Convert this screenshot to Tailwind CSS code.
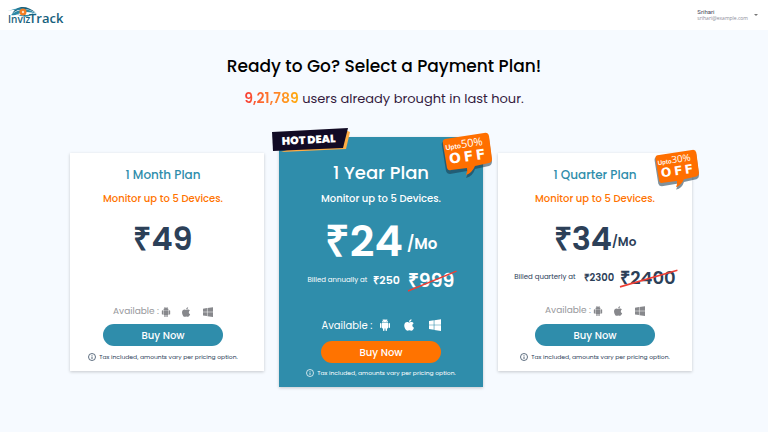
<!DOCTYPE html>
<html lang="en">
<head>
<meta charset="utf-8">
<meta name="viewport" content="width=device-width, initial-scale=1">
<title>InvizTrack – Payment Plans</title>
<script src="https://cdn.jsdelivr.net/npm/@tailwindcss/browser@4"></script>
</head>
<body class="min-h-screen bg-[#f6faff] font-['Poppins','Inter',sans-serif] text-[#2c4058]">

<svg class="hidden" aria-hidden="true">
  <symbol id="android" viewBox="0 0 24 24"><path fill="currentColor" d="M6 18c0 .6.4 1 1 1h1v3.5a1.5 1.5 0 0 0 3 0V19h2v3.500a1.500 1.500 0 0 0 3 0V19h1c.6 0 1-.4 1-1V8H6v10zM3.500 8A1.500 1.500 0 0 0 2 9.500v7a1.500 1.500 0 0 0 3 0v-7A1.500 1.500 0 0 0 3.500 8zm17 0A1.500 1.500 0 0 0 19 9.500v7a1.500 1.500 0 0 0 3 0v-7A1.500 1.500 0 0 0 20.500 8zm-5-5.800l1.300-1.300-.7-.7-1.500 1.500A6 6 0 0 0 12 1c-1 0-1.900.2-2.600.6L7.900.2l-.7.7 1.300 1.300A6 6 0 0 0 6 7h12a6 6 0 0 0-2.500-4.800zM10 5H9V4h1v1zm5 0h-1V4h1v1z"/></symbol>
  <symbol id="apple" viewBox="0 24 376 464"><path fill="currentColor" d="M318.700 268.700c-.2-36.700 16.400-64.400 50-84.800-18.800-26.900-47.200-41.700-84.700-44.600-35.500-2.800-74.300 20.700-88.500 20.700-15 0-49.400-19.700-76.400-19.700C63.300 141.200 4 184.800 4 273.500q0 39.300 14.400 81.200c12.800 36.700 59 126.700 107.200 125.200 25.200-.6 43-17.900 75.800-17.900 31.800 0 48.300 17.900 76.400 17.900 48.600-.7 90.400-82.500 102.600-119.300-65.200-30.700-61.700-90-61.700-91.900zm-56.600-164.200c27.300-32.400 24.800-61.900 24-72.500-24.100 1.400-52 16.400-67.900 34.900-17.500 19.800-27.800 44.300-25.600 71.900 26.100 2 49.900-11.400 69.500-34.300z"/></symbol>
  <symbol id="windows" viewBox="0 0 24 24"><path fill="currentColor" d="M0 4l9.500-1.500v9H0V4zm10.700-1.700L24 .3v11.200H10.700V2.300zM0 12.600h9.500v9L0 20.200v-7.600zm10.700 0H24v11.200l-13.300-1.900v-9.300z"/></symbol>
  <symbol id="info" viewBox="0 0 16 16"><circle cx="8" cy="8" r="7" fill="none" stroke="currentColor" stroke-width="1.500"/><path fill="currentColor" d="M7.200 7h1.600v5H7.200zM7.200 4h1.600v1.700H7.200z"/></symbol>
  <symbol id="bubble" viewBox="0 0 52 46">
    <path d="M5 8L45 2Q49 2 50 5L53 28Q53 32 50 33L36 36Q34 43 27 45Q29 42 28 38L11 41Q8 41 7 38L3 13Q2 9 5 8Z" fill="#17364a" opacity=".55" transform="translate(-1 1)"/>
    <path d="M5 7L44 1Q48 0 49 4L52 27Q52 30 49 31L35 34Q32 41 26 43Q28 39 27 36L11 38Q8 39 7 36L3 12Q2 8 5 7Z" fill="#ff6f00"/>
  </symbol>
</svg>

<header class="flex h-[30px] items-center justify-between bg-white pr-2.5 pl-2">
  <a href="#" aria-label="InvizTrack home">
    <svg class="h-6 w-15 overflow-visible" viewBox="0 -2 60 24">
      <path d="M4 9C8 1 18-1 28 8C19 2 10 3 4 9Z" fill="#17617c"/>
      <path d="M0 6Q10 2 17 4Q23 5 29 9Q18 5 10 9Q6 11 3 10Q7 6 13 5Q6 4 0 6Z" fill="#2b89a7"/>
      <path d="M8 9Q17 12 26 8Q19 15 8 9Z" fill="#2b89a7"/>
      <circle cx="15" cy="7" r="3.500" fill="#f47b20"/>
      <circle cx="15" cy="7" r="1.200" fill="#ffe0bd"/>
      <text x="0" y="18" class="font-['Open_Sans',sans-serif] text-[10px] font-semibold" fill="#17617c">Inviz</text>
      <text x="21" y="18" class="font-['Open_Sans',sans-serif] text-[13px] font-semibold" fill="#17617c">Track</text>
    </svg>
  </a>
  <button type="button" class="flex items-center gap-1.5 text-left font-['Roboto',sans-serif]">
    <span>
      <span class="block text-[6px] leading-[7px] text-[#444455]">Srihari</span>
      <span class="block font-['Open_Sans',sans-serif] text-[5px] leading-[7px] text-[#8b8c98]">srihari@example.com</span>
    </span>
    <svg class="h-1 w-1" viewBox="0 0 4 4" aria-hidden="true"><path d="M0 1h4L2 3z" fill="#777"/></svg>
  </button>
</header>

<main class="flex flex-col items-center">
  <h1 class="mt-6 text-[17px] leading-6 font-medium text-black">Ready to Go? Select a Payment Plan!</h1>
  <p class="mt-2.5 text-[13px] leading-5 text-[#341a3e]"><strong class="bg-linear-to-r from-[#f83a35] to-[#ffad0a] bg-clip-text text-[14px] font-semibold text-transparent">9,21,789</strong> users already brought in last hour.</p>

  <div class="mt-7 mr-1.5 flex items-center gap-[15px]">
    <section class="flex w-[194px] flex-col items-center bg-white pt-3 pr-2 pb-2 shadow-[0_1px_3px_#0003]">
      <h2 class="text-[12px] leading-5 font-medium text-[#2f8dab]">1 Month Plan</h2>
      <p class="mt-1.5 text-[10px] leading-4 font-medium text-[#ff7300]">Monitor up to 5 Devices.</p>
      <p class="mt-[11px] text-[32px] leading-10 font-semibold"><span class="font-['Open_Sans',sans-serif]">₹</span>49</p>
      <div class="mt-[45px] flex h-4 items-center text-[#87888c]">
        <span class="text-[9px] text-[#97989c]">Available :</span>
        <svg class="ml-0.5 h-2.5 w-2.5"><use href="#android"/></svg>
        <svg class="ml-2.5 h-2.5 w-2.5"><use href="#apple"/></svg>
        <svg class="ml-3 h-2.5 w-2.5"><use href="#windows"/></svg>
      </div>
      <button type="button" class="mt-1 h-[22px] w-[120px] rounded-full bg-[#2f8dab] text-[10px] font-medium text-white">Buy Now</button>
      <p class="mt-[5px] flex items-center gap-[3px] text-[6px] leading-3"><svg class="h-2 w-2"><use href="#info"/></svg>Tax included, amounts vary per pricing option.</p>
    </section>

    <section class="relative flex w-[204px] flex-col items-center bg-[#2f8dab] pt-6 pb-2 text-white shadow-[0_1px_3px_#0003]">
      <svg class="absolute -top-2.5 -left-2 h-[27px] w-20" viewBox="0 0 80 27">
        <path d="M10 25L75 22L79 5L74 3Z" fill="#ffad45"/>
        <path d="M1 5L77 1L72 21L2 24Z" fill="#120b25"/>
        <text x="11" y="18" transform="rotate(-3 12 18)" fill="white" class="font-['Poppins','Lato',sans-serif] text-[11px] font-black">HOT DEAL</text>
      </svg>
      <svg class="absolute -top-[5px] -right-[9px] h-[46px] w-[52px]" viewBox="0 0 52 46">
        <use href="#bubble"/>
        <g transform="rotate(-8 7 20)" fill="white">
          <text x="6" y="18" class="font-['Lato',sans-serif] text-[7px] font-bold">Upto</text><text x="22" y="18" class="font-['Open_Sans',sans-serif] text-[11px] font-medium">50%</text>
          <text x="8 23 35" y="32" class="font-['DejaVu_Sans',sans-serif] text-[14px] font-bold">OFF</text>
        </g>
      </svg>
      <h2 class="text-[18px] leading-6 font-medium">1 Year Plan</h2>
      <p class="mt-1.5 text-[10px] leading-4 font-medium">Monitor up to 5 Devices.</p>
      <p class="mt-[9px] flex h-12 items-center gap-1 text-[43px] leading-12 font-semibold"><span><span class="font-['Open_Sans',sans-serif]">₹</span>24</span> <span class="pt-2 text-[15px] leading-5">/Mo</span></p>
      <p class="mt-1 flex h-6 items-center">
        <span class="text-[7px]">Billed annually at</span>
        <strong class="ml-1.5 text-[11px] font-semibold"><span class="font-['Open_Sans',sans-serif]">₹</span>250</strong>
        <s class="relative ml-2 text-[19px] leading-6 font-semibold no-underline"><span class="font-['Open_Sans',sans-serif]">₹</span>999<svg class="absolute inset-0 h-full w-full overflow-visible" viewBox="0 0 50 24" preserveAspectRatio="none" aria-hidden="true"><path d="M0 22L52 3" stroke="#ee3e34" stroke-width="1.500"/></svg></s>
      </p>
      <div class="mt-[25px] flex h-4 items-center">
        <span class="text-[10px]">Available :</span>
        <svg class="ml-1.5 h-3 w-3"><use href="#android"/></svg>
        <svg class="ml-3 h-3 w-3"><use href="#apple"/></svg>
        <svg class="ml-3.5 h-3 w-3"><use href="#windows"/></svg>
      </div>
      <button type="button" class="mt-2 h-[22px] w-[120px] rounded-full bg-[#ff7300] text-[10px] font-medium text-white">Buy Now</button>
      <p class="mt-1 flex items-center gap-[3px] text-[6px] leading-3"><svg class="h-2 w-2"><use href="#info"/></svg>Tax included, amounts vary per pricing option.</p>
    </section>

    <section class="relative flex w-[194px] flex-col items-center bg-white pt-3 pb-2 shadow-[0_1px_3px_#0003]">
      <svg class="absolute -top-1 -right-[7px] h-[41px] w-[46px]" viewBox="0 0 52 46">
        <use href="#bubble"/>
        <g transform="rotate(-8 7 20)" fill="white">
          <text x="6" y="18" class="font-['Lato',sans-serif] text-[7px] font-bold">Upto</text><text x="22" y="18" class="font-['Open_Sans',sans-serif] text-[11px] font-medium">30%</text>
          <text x="8 23 35" y="32" class="font-['DejaVu_Sans',sans-serif] text-[14px] font-bold">OFF</text>
        </g>
      </svg>
      <h2 class="text-[12px] leading-5 font-medium text-[#2f8dab]">1 Quarter Plan</h2>
      <p class="mt-1.5 text-[10px] leading-4 font-medium text-[#ff7300]">Monitor up to 5 Devices.</p>
      <p class="mt-[11px] flex h-10 items-center text-[32px] leading-10 font-semibold"><span><span class="font-['Open_Sans',sans-serif]">₹</span>34</span><span class="pt-2 text-[12px] leading-4">/Mo</span></p>
      <p class="mt-[7px] flex h-6 items-center">
        <span class="text-[7px]">Billed quarterly at</span>
        <strong class="ml-2 text-[10px] font-semibold"><span class="font-['Open_Sans',sans-serif]">₹</span>2300</strong>
        <s class="relative ml-1.5 text-[18px] leading-6 font-semibold no-underline"><span class="font-['Open_Sans',sans-serif]">₹</span>2400<svg class="absolute inset-0 h-full w-full overflow-visible" viewBox="0 0 58 24" preserveAspectRatio="none" aria-hidden="true"><path d="M0 21L60 5" stroke="#ee3e34" stroke-width="1.500"/></svg></s>
      </p>
      <div class="mt-[14px] flex h-4 items-center text-[#87888c]">
        <span class="text-[9px] text-[#97989c]">Available :</span>
        <svg class="ml-0.5 h-2.5 w-2.5"><use href="#android"/></svg>
        <svg class="ml-2.5 h-2.5 w-2.5"><use href="#apple"/></svg>
        <svg class="ml-3 h-2.5 w-2.5"><use href="#windows"/></svg>
      </div>
      <button type="button" class="mt-[5px] h-[22px] w-[120px] rounded-full bg-[#2f8dab] text-[10px] font-medium text-white">Buy Now</button>
      <p class="mt-[5px] flex items-center gap-[3px] text-[6px] leading-3"><svg class="h-2 w-2"><use href="#info"/></svg>Tax included, amounts vary per pricing option.</p>
    </section>
  </div>
</main>
</body>
</html>
